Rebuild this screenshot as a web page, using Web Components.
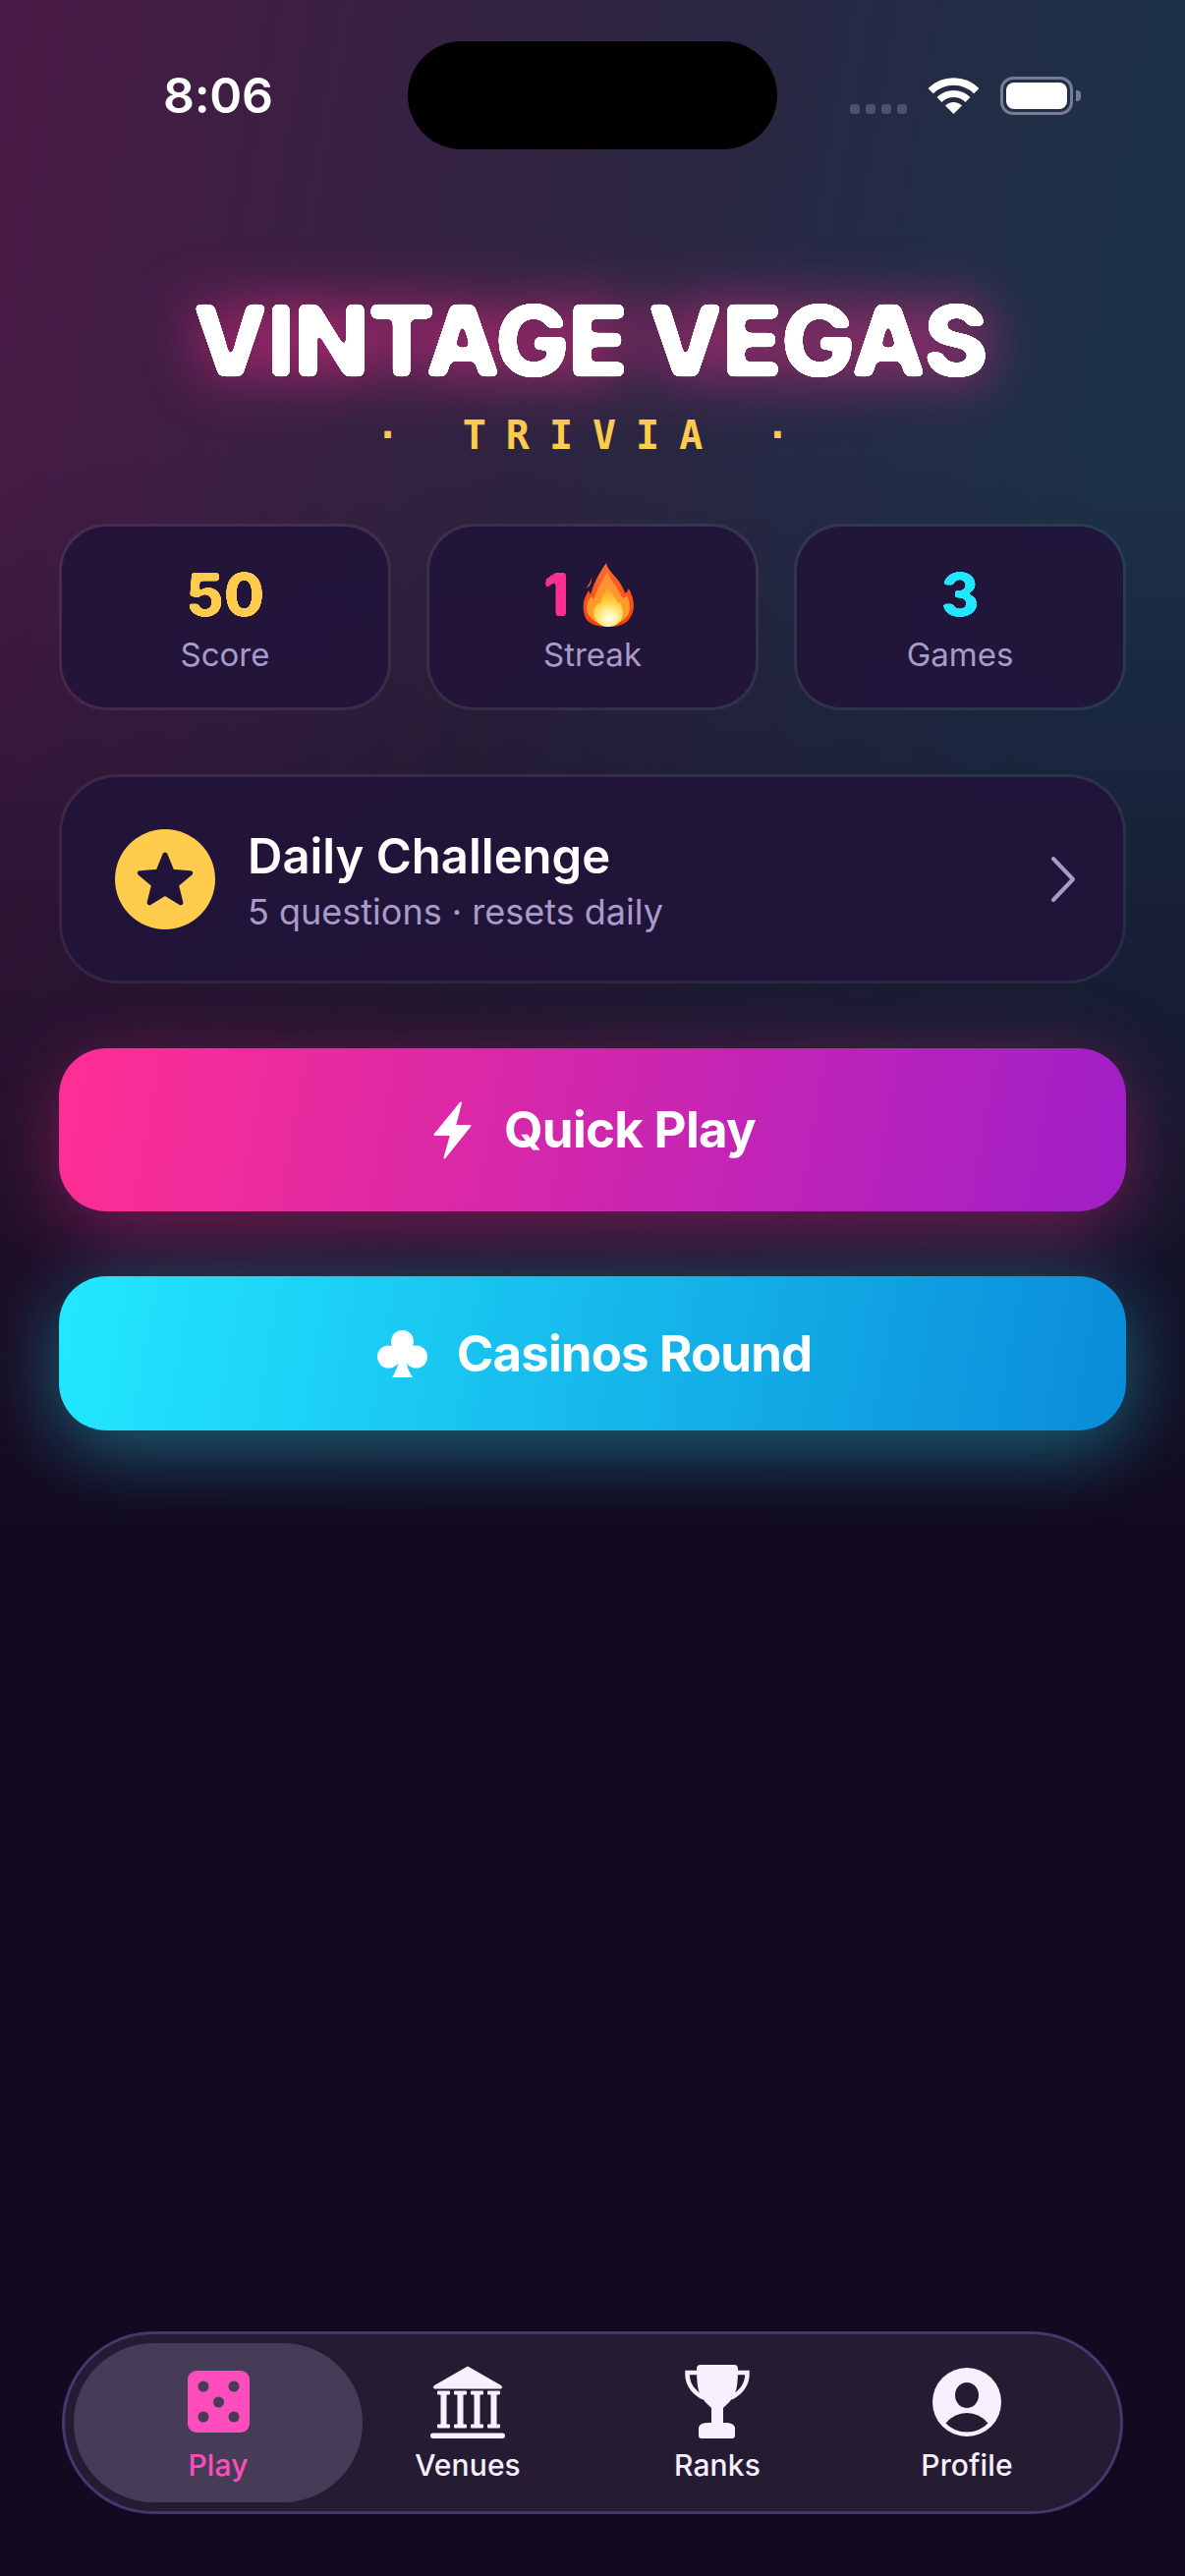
<!DOCTYPE html>
<html lang="en">
<head>
<meta charset="utf-8">
<title>Vintage Vegas Trivia</title>
<style>
  html, body { margin: 0; padding: 0; }
  body {
    width: 1206px;
    height: 2622px;
    overflow: hidden;
    font-family: Inter, "Liberation Sans", sans-serif;
    background:
      linear-gradient(180deg, rgba(18,10,32,0) 0, rgba(18,10,32,0) 450px, #120a20 1560px),
      linear-gradient(100deg, #4a1a45 0%, #2e2440 37%, #1c3148 72%);
    background-color: #120a20;
  }
</style>
</head>
<body>
<game-screen>
  <status-bar></status-bar>
  <game-title></game-title>
  <stats-row>
    <stat-card color="#ffcc4d" label="Score">50</stat-card>
    <stat-card color="#ff2e93" label="Streak" flame>1</stat-card>
    <stat-card color="#22e6ff" label="Games">3</stat-card>
  </stats-row>
  <daily-card></daily-card>
  <action-button kind="pink">
    <svg slot="icon" style="margin:0 3px 0 4px" width="39" height="59" viewBox="0 0 39 59"><path d="M28 1.500 1.500 34H18L11.500 57.500 37.500 25H22Z" fill="#fff" stroke="#fff" stroke-width="2" stroke-linejoin="round"/></svg>
    Quick Play
  </action-button>
  <action-button kind="cyan">
    <svg slot="icon" style="margin-left:4px" width="51" height="48" viewBox="0 0 51 48" fill="#fff"><circle cx="25.500" cy="11.500" r="11.500"/><circle cx="11.500" cy="27" r="11.500"/><circle cx="39.500" cy="27" r="11.500"/><path d="M22 20h7l1 14c.5 5 3 9 6 14H15c3-5 5.500-9 6-14z"/></svg>
    Casinos Round
  </action-button>
  <tab-bar>
    <tab-item label="Play" active>
      <svg width="63" height="63" viewBox="0 0 63 63"><rect width="63" height="63" rx="9" fill="#ff4dbd"/><g fill="#463c58"><circle cx="16" cy="16" r="5.500"/><circle cx="47" cy="16" r="5.500"/><circle cx="31.500" cy="32" r="5.500"/><circle cx="16" cy="47" r="5.500"/><circle cx="47" cy="47" r="5.500"/></g></svg>
    </tab-item>
    <tab-item label="Venues">
      <svg width="76" height="74" viewBox="0 0 76 74" fill="#f8f0ff"><path d="M38 1 72 20.500q2 2.500-1 2.500H5q-3 0-1-2.500z" stroke="#f8f0ff" stroke-linejoin="round"/><g><path d="M7 26.500q0-1 1-1h11q1 0 1 1v2q0 1-1 1h-2.500v30H19q1 0 1 1v2q0 1-1 1H8q-1 0-1-1v-2q0-1 1-1h2.500v-30H8q-1 0-1-1z"/><path d="M24 26.500q0-1 1-1h11q1 0 1 1v2q0 1-1 1h-2.500v30H36q1 0 1 1v2q0 1-1 1H25q-1 0-1-1v-2q0-1 1-1h2.500v-30H25q-1 0-1-1z"/><path d="M41 26.500q0-1 1-1h11q1 0 1 1v2q0 1-1 1h-2.500v30H53q1 0 1 1v2q0 1-1 1H42q-1 0-1-1v-2q0-1 1-1h2.500v-30H42q-1 0-1-1z"/><path d="M58 26.500q0-1 1-1h11q1 0 1 1v2q0 1-1 1h-2.500v30H70q1 0 1 1v2q0 1-1 1H59q-1 0-1-1v-2q0-1 1-1h2.500v-30H59q-1 0-1-1z"/></g><rect y="68.500" width="76" height="5.500" rx="2.700"/></svg>
    </tab-item>
    <tab-item label="Ranks">
      <svg width="66" height="75" viewBox="0 0 66 75"><path d="M13 8H2.500Q2 24 18 33M53 8h10.500Q64 24 48 33" fill="none" stroke="#f8f0ff" stroke-width="4.500" stroke-linecap="round"/><path d="M16 0h34q4 0 4 4 0 19-3 25-3 7-10 13l-2 2v15h2q9 0 10 5v8q0 3-3 3H17q-3 0-3-3v-8q1-5 10-5h3V44l-2-2q-7-6-10-13-3-6-3-25 0-4 4-4z" fill="#f8f0ff"/></svg>
    </tab-item>
    <tab-item label="Profile">
      <svg width="70" height="70" viewBox="0 0 70 70"><circle cx="35" cy="35" r="35" fill="#f8f0ff"/><ellipse cx="35" cy="28" rx="12" ry="13" fill="#251c34"/><path d="M13.500 56.500Q22 46 35 46q13 0 21.500 10.500Q48 65.500 35 65.500 22 65.500 13.500 56.500z" fill="#251c34"/></svg>
    </tab-item>
  </tab-bar>
</game-screen>

<script>
class GameScreen extends HTMLElement {
  connectedCallback() {
    this.attachShadow({ mode: 'open' });
    this.shadowRoot.innerHTML = `
      <style>
        :host {
          display: flex;
          flex-direction: column;
          box-sizing: border-box;
          height: 2622px;
          padding-bottom: 63px;
        }
        ::slotted(tab-bar) { margin-top: auto; }
      </style>
      <slot></slot>
    `;
  }
}

class StatusBar extends HTMLElement {
  connectedCallback() {
    this.attachShadow({ mode: 'open' });
    this.shadowRoot.innerHTML = `
      <style>
        :host {
          display: grid;
          grid-template-columns: 1fr 376px 1fr;
          padding-top: 42px;
          height: 110px;
          color: #fff;
        }
        .time {
          padding: 30px 0 0 166px;
          font: 600 50px/51px Inter, sans-serif;
          letter-spacing: -.3px;
        }
        .island { background: #000; border-radius: 55px; height: 110px; }
        .right {
          display: flex;
          align-items: flex-start;
          padding: 36px 0 0 74px;
        }
        .signal { display: flex; gap: 6px; margin-top: 28px; }
        .signal i { width: 10px; height: 10px; border-radius: 3px; background: #50506c; }
        .wifi { margin: 1px 0 0 22px; }
        .battery {
          box-sizing: border-box;
          width: 74px;
          height: 39px;
          margin-left: 22px;
          padding: 3px;
          border: 3.500px solid #787c90;
          border-radius: 13px;
        }
        .battery i { display: block; height: 100%; background: #fff; border-radius: 8px; }
        .cap { width: 5px; height: 11px; margin: 14px 0 0 3px; background: #787c90; border-radius: 0 4px 4px 0; }
      </style>
      <div class="time">8:06</div>
      <div class="island"></div>
      <div class="right">
        <div class="signal"><i></i><i></i><i></i><i></i></div>
        <svg class="wifi" width="51" height="37" viewBox="0 0 51 37" fill="none" stroke="#fff">
          <path d="M2.200 13.700a33 33 0 0 1 46.600 0" stroke-width="7.500"/>
          <path d="M11 22.500a20.500 20.500 0 0 1 29 0" stroke-width="7"/>
          <path d="M17 28.500a12 12 0 0 1 17 0L25.500 37z" fill="#fff" stroke="none"/>
        </svg>
        <div class="battery"><i></i></div>
        <div class="cap"></div>
      </div>
    `;
  }
}

class GameTitle extends HTMLElement {
  connectedCallback() {
    this.attachShadow({ mode: 'open' });
    this.shadowRoot.innerHTML = `
      <style>
        :host {
          display: block;
          text-align: center;
          padding-top: 136px;
        }
        h1 {
          margin: 0;
          padding-right: 6px;
          font: 800 101px/116px Inter, sans-serif;
          letter-spacing: -1.600px;
          color: #fff;
          filter: url(#rounded);
        }
        p {
          margin: 15px 0 0;
          font: 700 40px/48px "DejaVu Sans Mono", "Liberation Mono", monospace;
          letter-spacing: 20px;
          color: #ffcc4d;
          white-space: pre;
        }
        svg { position: absolute; width: 0; height: 0; }
      </style>
      <svg aria-hidden="true">
        <filter id="rounded" x="-15%" y="-80%" width="130%" height="260%" color-interpolation-filters="sRGB">
          <feGaussianBlur in="SourceGraphic" stdDeviation="3" result="soft"/>
          <feColorMatrix in="soft" type="matrix" values="1 0 0 0 0 0 1 0 0 0 0 0 1 0 0 0 0 0 30 -13" result="shape"/>
          <feFlood flood-color="#ff2e93" flood-opacity=".85"/>
          <feComposite in2="shape" operator="in"/>
          <feGaussianBlur stdDeviation="30" result="glow"/>
          <feMerge><feMergeNode in="glow"/><feMergeNode in="shape"/></feMerge>
        </filter>
      </svg>
      <h1>VINTAGE VEGAS</h1>
      <p>· TRIVIA ·</p>
    `;
  }
}

class StatsRow extends HTMLElement {
  connectedCallback() {
    this.attachShadow({ mode: 'open' });
    this.shadowRoot.innerHTML = `
      <style>
        :host {
          display: grid;
          grid-template-columns: repeat(3, 338px);
          gap: 36px;
          margin: 66px 60px 0;
        }
      </style>
      <slot></slot>
    `;
  }
}

class StatCard extends HTMLElement {
  connectedCallback() {
    const color = this.getAttribute('color');
    const label = this.getAttribute('label');
    const flame = this.hasAttribute('flame') ? `
      <svg class="flame" width="52" height="66" viewBox="0 0 52 66">
        <defs>
          <linearGradient id="f1" x1="0" y1="0" x2="0" y2="1"><stop offset="0" stop-color="#ff6a2e"/><stop offset="1" stop-color="#f5400e"/></linearGradient>
          <linearGradient id="f2" x1="0" y1="0" x2="0" y2="1"><stop offset="0" stop-color="#ff8f3a"/><stop offset="1" stop-color="#ffa020"/></linearGradient>
          <radialGradient id="f3" gradientUnits="userSpaceOnUse" cx="27" cy="57" r="30"><stop offset="0" stop-color="#fffef0"/><stop offset=".25" stop-color="#fff29a"/><stop offset=".6" stop-color="#ffc93a"/><stop offset="1" stop-color="#ff9d20"/></radialGradient>
        </defs>
        <path d="M9 15C9 20 6 22 4 27 7 25 10 20 9 15Z" fill="#ff6a30"/>
        <path d="M24 1C26 10 34 14 39 23 41 27 43 30 43 32 45 31 46 29 47 27 50 33 52 39 52 45 52 51 49 56 46 60 40 65 33 66 26 66 18 66 10 65 4 59 1 54 0 48 1 41 2 36 4 33 6 29L8 33C11 24 13 17 24 1Z" fill="url(#f1)"/>
        <path d="M25 10C27 17 34 23 38 32 39 34 41 37 42 37L45 34C47 39 48 43 48 47 48 56 38 64 26 64 14 64 4 56 4 47 4 42 6 38 9 35L11 38C14 29 19 20 25 10Z" fill="url(#f2)"/>
        <path d="M26 24C27 31 33 35 36 42L38 41C40 46 41 49 41 52 41 60 34 66 26 66 18 66 11 60 11 52 11 47 14 44 16 42L18 43C19 36 22 31 26 24Z" fill="url(#f3)"/>
      </svg>` : '';
    this.attachShadow({ mode: 'open' });
    this.shadowRoot.innerHTML = `
      <style>
        :host {
          display: flex;
          flex-direction: column;
          align-items: center;
          box-sizing: border-box;
          height: 190px;
          padding-top: 34px;
          background: rgba(33, 20, 58, .9);
          border: 3px solid rgba(255, 255, 255, .07);
          background-clip: padding-box;
          border-radius: 48px;
        }
        .value {
          display: flex;
          align-items: center;
          gap: 14px;
          height: 70px;
          font: 800 60px/70px Inter, sans-serif;
          color: ${color};
        }
        .num { filter: url(#soft); }
        .flame { margin-right: 8px; }
        .label {
          margin-top: 4px;
          font: 400 33px/44px Inter, sans-serif;
          color: #a99bc9;
        }
        .filters { position: absolute; width: 0; height: 0; }
      </style>
      <svg class="filters" aria-hidden="true">
        <filter id="soft" x="-20%" y="-20%" width="140%" height="140%" color-interpolation-filters="sRGB">
          <feGaussianBlur stdDeviation="1.500"/>
          <feColorMatrix type="matrix" values="1 0 0 0 0 0 1 0 0 0 0 0 1 0 0 0 0 0 10 -4.500"/>
        </filter>
      </svg>
      <div class="value"><span class="num"><slot></slot></span>${flame}</div>
      <div class="label">${label}</div>
    `;
  }
}

class DailyCard extends HTMLElement {
  connectedCallback() {
    this.attachShadow({ mode: 'open' });
    this.shadowRoot.innerHTML = `
      <style>
        :host {
          display: flex;
          align-items: center;
          box-sizing: border-box;
          height: 213px;
          margin: 65px 60px 0;
          padding: 0 48px 0 54px;
          background: rgba(33, 20, 58, .9);
          background-clip: padding-box;
          border: 3px solid rgba(255, 255, 255, .07);
          border-radius: 60px;
        }
        .badge {
          display: flex;
          align-items: center;
          justify-content: center;
          flex: none;
          width: 102px;
          height: 102px;
          border-radius: 50%;
          background: #ffcc4d;
        }
        .text { flex: 1; margin-left: 33px; padding-top: 3px; }
        .title { font: 600 49px/60px Inter, sans-serif; color: #fff; }
        .sub { margin-top: 3px; font: 400 36px/46px Inter, sans-serif; color: #a99bc9; }
      </style>
      <div class="badge">
        <svg width="60" height="60" viewBox="0 0 60 60"><path d="M30 5 37.050 22.300 55.700 23.700 41.400 35.700 45.900 53.800 30 44 14.100 53.800 18.600 35.700 4.300 23.700 22.950 22.300Z" fill="#21143a" stroke="#21143a" stroke-width="5" stroke-linejoin="round"/></svg>
      </div>
      <div class="text">
        <div class="title">Daily Challenge</div>
        <div class="sub">5 questions · resets daily</div>
      </div>
      <svg width="29" height="48" viewBox="0 0 29 48" fill="none"><path d="M6 3 26 24 6 45" stroke="#a99bc9" stroke-width="4" stroke-linecap="round" stroke-linejoin="round"/></svg>
    `;
  }
}

class ActionButton extends HTMLElement {
  connectedCallback() {
    const cyan = this.getAttribute('kind') === 'cyan';
    this.attachShadow({ mode: 'open' });
    this.shadowRoot.innerHTML = `
      <style>
        :host {
          display: flex;
          align-items: center;
          justify-content: center;
          gap: 30px;
          height: ${cyan ? 157 : 166}px;
          margin: 66px 60px 0;
          border-radius: 48px;
          font: 700 51px/60px Inter, sans-serif;
          letter-spacing: ${cyan ? -.9 : -.7}px;
          color: #fff;
          background: ${cyan
            ? 'linear-gradient(100deg, #22e8ff, #0a8bd9)'
            : 'linear-gradient(100deg, #ff2e93, #a01fc8)'};
          box-shadow: 0 18px 80px ${cyan ? 'rgba(34, 232, 255, .4)' : 'rgba(255, 46, 147, .4)'};
        }
      </style>
      <slot name="icon"></slot>
      <span><slot></slot></span>
    `;
  }
}

class TabBar extends HTMLElement {
  connectedCallback() {
    this.attachShadow({ mode: 'open' });
    this.shadowRoot.innerHTML = `
      <style>
        :host {
          display: grid;
          grid-template-columns: repeat(4, 254px);
          box-sizing: border-box;
          height: 186px;
          margin: 0 63px;
          padding: 9px 29px;
          background: #251c34;
          border: 3px solid #4a3570;
          border-radius: 93px;
        }
      </style>
      <slot></slot>
    `;
  }
}

class TabItem extends HTMLElement {
  connectedCallback() {
    const active = this.hasAttribute('active');
    this.attachShadow({ mode: 'open' });
    this.shadowRoot.innerHTML = `
      <style>
        :host {
          display: flex;
          flex-direction: column;
          align-items: center;
          margin: 0 -20px;
          padding-top: 22px;
          border-radius: 81px;
          background: ${active ? '#463c58' : 'transparent'};
          color: ${active ? '#ff4dbd' : '#f8f0ff'};
        }
        .icon { display: flex; align-items: center; height: 75px; }
        .label { margin-top: 8px; font: 500 30px/38px Inter, sans-serif; letter-spacing: .1px; }
      </style>
      <div class="icon"><slot></slot></div>
      <div class="label">${this.getAttribute('label')}</div>
    `;
  }
}

customElements.define('game-screen', GameScreen);
customElements.define('status-bar', StatusBar);
customElements.define('game-title', GameTitle);
customElements.define('stats-row', StatsRow);
customElements.define('stat-card', StatCard);
customElements.define('daily-card', DailyCard);
customElements.define('action-button', ActionButton);
customElements.define('tab-bar', TabBar);
customElements.define('tab-item', TabItem);
</script>
</body>
</html>
